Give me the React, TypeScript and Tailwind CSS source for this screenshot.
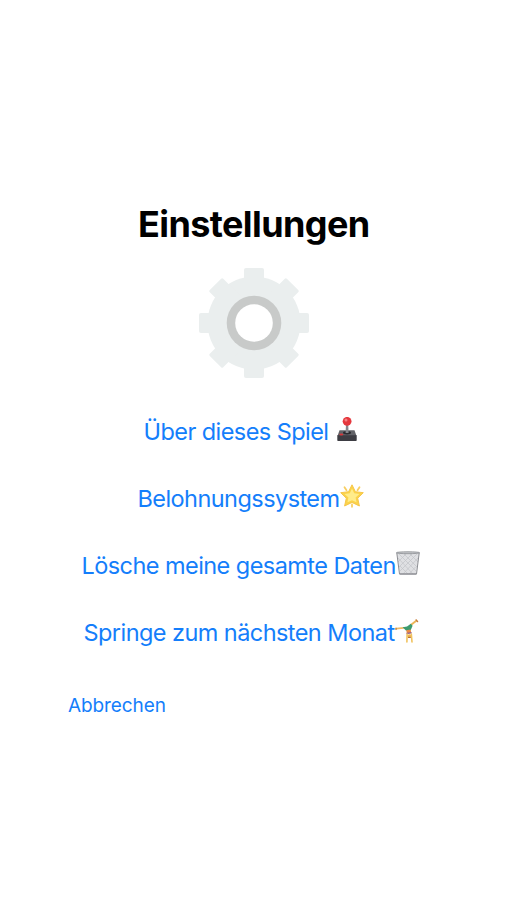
import React from 'react';

interface MenuLinkProps {
  label: string;
  className: string;
  children: React.ReactNode;
}

const GearIcon: React.FC = () => (
  <svg width="112" height="112" viewBox="-56 -56 112 112" className="block">
    <g fill="#eaeeee">
      <circle r="46.5" />
      {[0, 90].map((angle) => (
        <rect key={angle} x="-10" y="-55" width="20" height="110" rx="2" transform={`rotate(${angle})`} />
      ))}
      {[45, 135].map((angle) => (
        <rect key={angle} x="-9.5" y="-54.5" width="19" height="109" rx="1.5" transform={`rotate(${angle})`} />
      ))}
    </g>
    <circle r="27.3" fill="#c8cac9" />
    <circle r="18.8" fill="#fff" />
  </svg>
);

const JoystickIcon: React.FC = () => (
  <svg width="24" height="24" viewBox="0 0 24 24">
    <path d="M4.5 13.2h15l2 5.8h-19z" fill="#626368" />
    <path d="M2.3 18.2h19.4v5.1a.7.7 0 0 1-.7.7H3a.7.7 0 0 1-.7-.7z" fill="#3d3d43" />
    <ellipse cx="12" cy="15.8" rx="4" ry="1.7" fill="#2b2b30" />
    <path d="M11 7h2.2l.4 9h-3z" fill="#85868c" />
    <ellipse cx="6.3" cy="17.6" rx="2" ry="1" fill="#d5373b" />
    <circle cx="12.1" cy="4.3" r="4.4" fill="#e5383e" />
    <circle cx="11" cy="3" r="1.5" fill="#f58083" />
  </svg>
);

const StarIcon: React.FC = () => (
  <svg width="24" height="24" viewBox="0 0 24 24">
    <g stroke="#f8cf63" strokeWidth="1.8" strokeLinecap="round">
      <path d="M4.5 3.2l2 3M19.5 3.2l-2 3M12 20.5v2.3" />
    </g>
    <path
      d="M12 .8l3.4 6.9 7.9 1-5.6 5.5 1.7 7.8L12 18.4 4.6 22l1.7-7.8L.7 8.7l7.9-1z"
      fill="#fbd34a"
      stroke="#f6c64a"
      strokeWidth="1"
      strokeLinejoin="round"
    />
    <path d="M12 4.5l2.2 4.7 5.2.8-3.8 3.6.9 4.6-4.5-2-4.5 2 .9-4.6L4.6 10l5.2-.8z" fill="#ffec8a" />
  </svg>
);

const TrashIcon: React.FC = () => (
  <svg width="24" height="24" viewBox="0 0 24 24">
    <path d="M.8 1.8h22.4L20 23.3H4z" fill="#dfe0e3" />
    <path
      d="M2 7l15 16M3 3l17 17M8 3l13 13M14 3l8 8M22 7L7 23M21 3L4 20M16 3L3 16M10 3L2 11M19.5 16L13 23M4 15l8 8"
      stroke="#c1c3c7"
      strokeWidth=".7"
    />
    <path d="M.8 2l2.7 21h17L23.2 2" fill="none" stroke="#8b8d92" strokeWidth="1" />
    <ellipse cx="12" cy="1.7" rx="11.6" ry="1" fill="#c2c4c8" stroke="#85888d" strokeWidth=".7" />
    <path d="M3.6 23h16.8" stroke="#94969a" strokeWidth="1.2" />
  </svg>
);

const CartwheelIcon: React.FC = () => (
  <svg width="24" height="24" viewBox="0 0 24 24" fill="none" strokeLinecap="round" strokeLinejoin="round">
    <path d="M1.4 9.6l7.4-.7" stroke="#edbb66" strokeWidth="1.6" />
    <path d="M1 9v1.4" stroke="#b87338" strokeWidth="1.2" />
    <path d="M15.8 6l5.5-4.2" stroke="#edb65a" strokeWidth="2" />
    <path d="M21.2.9l1.4 1.7" stroke="#c77c3d" strokeWidth="1.4" />
    <path d="M7.6 8.3l4.4-.9 3.8-2.7 1.8 2-1.8 4.2-4.6.8z" fill="#3c9b70" />
    <path d="M11.3 11.2l4.4-.6.5 3.5-4.4.7z" fill="#ed8b43" />
    <path d="M12 14.3l4.2-.4" stroke="#8a5a94" strokeWidth="1.3" />
    <path d="M12.1 15l-.2 8M16.3 15l.7 8" stroke="#f1c35f" strokeWidth="1.6" />
    <circle cx="14.3" cy="17" r="1.8" fill="#efb54b" />
    <path d="M13.4 18.4h2" stroke="#ad6430" strokeWidth="1" />
  </svg>
);

const MenuLink: React.FC<MenuLinkProps> = ({ label, className, children }) => (
  <button className={`flex h-[67.2px] items-center text-[23.5px] leading-8 tracking-[-0.56px] whitespace-nowrap ${className}`}>
    <span>{label}</span>
    <span className="mb-[5px]">{children}</span>
  </button>
);

const App: React.FC = () => (
  <main className="flex h-[900px] w-full flex-col bg-white pt-[201px] font-['Inter',sans-serif] text-[#147efb]">
    <h1 className="pl-[138px] text-[36px] leading-[46px] font-bold tracking-[-0.6px] text-black">Einstellungen</h1>
    <div className="mt-5 pl-[198px]">
      <GearIcon />
    </div>
    <nav className="mt-[19px] flex flex-col items-start">
      <MenuLink label="Über dieses Spiel" className="ml-[143.5px] gap-[7px]">
        <JoystickIcon />
      </MenuLink>
      <MenuLink label="Belohnungssystem" className="ml-[137.5px]">
        <StarIcon />
      </MenuLink>
      <MenuLink label="Lösche meine gesamte Daten" className="ml-[81.5px]">
        <TrashIcon />
      </MenuLink>
      <MenuLink label="Springe zum nächsten Monat" className="ml-[83.5px]">
        <CartwheelIcon />
      </MenuLink>
    </nav>
    <button className="mt-[27px] ml-[68px] self-start text-[19px] leading-6 tracking-[-0.1px]">Abbrechen</button>
  </main>
);

export default App;
